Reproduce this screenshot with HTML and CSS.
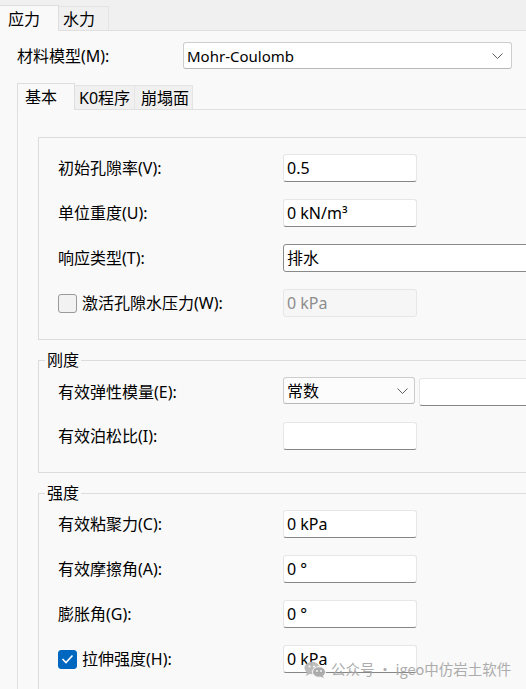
FILE: index.html
```html
<!DOCTYPE html>
<html lang="zh-CN">
<head>
<meta charset="utf-8">
<title>材料属性</title>
<link rel="stylesheet" href="styles.css">
</head>
<body>
<div class="tabbar">
  <div class="tab tab-active">应力</div>
  <div class="tab tab-water">水力</div>
</div>
<div class="page">
  <div class="model-row">
    <span class="model-label">材料模型(M):</span>
    <div class="combo model-combo">
      <span class="model-value">Mohr-Coulomb</span>
      <svg class="chev" width="11" height="6" viewBox="0 0 11 6"><polyline points="0.5,0.5 5.5,5.5 10.5,0.5" fill="none" stroke="#5f5f5f" stroke-width="1"/></svg>
    </div>
  </div>
  <div class="subtabs">
    <div class="subtab subtab-active">基本</div>
    <div class="subtab subtab-k0">K0程序</div>
    <div class="subtab subtab-cap">崩塌面</div>
  </div>
  <div class="panel">
    <div class="group group-basic">
      <div class="rows rows-basic">
        <div class="row"><span class="lbl">初始孔隙率(V):</span><div class="input">0.5</div></div>
        <div class="row"><span class="lbl">单位重度(U):</span><div class="input">0 kN/m³</div></div>
        <div class="row"><span class="lbl">响应类型(T):</span><div class="input wide-combo">排水</div></div>
        <div class="row"><span class="lbl chk-lbl"><span class="checkbox"></span>激活孔隙水压力(W):</span><div class="input disabled">0 kPa</div></div>
      </div>
    </div>
    <fieldset class="group group-stiff">
      <legend>刚度</legend>
      <div class="rows rows-stiff">
        <div class="row row-stiff1"><span class="lbl">有效弹性模量(E):</span>
          <div class="pair">
            <div class="combo const-combo"><span>常数</span><svg class="chev" width="11" height="6" viewBox="0 0 11 6"><polyline points="0.5,0.5 5.5,5.5 10.5,0.5" fill="none" stroke="#5f5f5f" stroke-width="1"/></svg></div>
            <div class="input side-input"></div>
          </div>
        </div>
        <div class="row"><span class="lbl">有效泊松比(I):</span><div class="input"></div></div>
      </div>
    </fieldset>
    <fieldset class="group group-strength">
      <legend>强度</legend>
      <div class="rows rows-strength">
        <div class="row"><span class="lbl">有效粘聚力(C):</span><div class="input">0 kPa</div></div>
        <div class="row"><span class="lbl">有效摩擦角(A):</span><div class="input">0 °</div></div>
        <div class="row"><span class="lbl">膨胀角(G):</span><div class="input">0 °</div></div>
        <div class="row"><span class="lbl chk-lbl"><span class="checkbox checked"><svg width="13" height="10" viewBox="0 0 13 10"><polyline points="1.5,5 5,8.5 11.5,1.5" fill="none" stroke="#fff" stroke-width="1.6"/></svg></span>拉伸强度(H):</span><div class="input">0 kPa</div></div>
      </div>
    </fieldset>
  </div>
</div>
<div class="watermark">
  <svg class="wx" width="22" height="17" viewBox="0 0 22 17">
    <ellipse cx="8" cy="7" rx="7.5" ry="6.3" fill="#b9b9b9"/>
    <path d="M3 11 L2 15 L6.5 12.5 Z" fill="#b9b9b9"/>
    <ellipse cx="15" cy="11" rx="6.5" ry="5.3" fill="#a9a9a9" stroke="#f9f9f9" stroke-width="1"/>
    <path d="M18.5 14.5 L20 17 L16 15.5 Z" fill="#a9a9a9"/>
    <circle cx="5.5" cy="5.5" r="1" fill="#f9f9f9"/>
    <circle cx="10" cy="5.5" r="1" fill="#f9f9f9"/>
    <circle cx="13" cy="10" r="0.9" fill="#f9f9f9"/>
    <circle cx="17" cy="10" r="0.9" fill="#f9f9f9"/>
  </svg>
  <span>公众号 · igeo中仿岩土软件</span>
</div>
</body>
</html>
```
FILE: styles.css
```css
* { box-sizing: border-box; }
html, body { margin: 0; }
body {
  width: 526px;
  height: 689px;
  overflow: hidden;
  position: relative;
  background: #f9f9f9;
  color: #000;
  font-family: "Noto Sans", "Noto Sans CJK SC", sans-serif;
  font-size: 16px;
  line-height: 20px;
}

/* top tabs */
.tabbar {
  height: 31px;
  background: #f0f0f0;
  border-bottom: 1px solid #e0e0e0;
  display: flex;
  align-items: flex-end;
}
.tab {
  height: 24px;
  display: flex;
  align-items: center;
  border: 1px solid #e4e4e4;
  border-bottom: none;
  background: #f0f0f0;
}
.tab-active {
  width: 59px;
  height: 26px;
  margin-bottom: -1px;
  padding-left: 8px;
  background: #f9f9f9;
  border-color: #dedede;
  border-left: none;
}
.tab-water {
  width: 50px;
  padding-left: 4px;
  border-left: none;
}

.page { padding-left: 17px; }

.model-row {
  margin-top: 11px;
  height: 27px;
  display: flex;
  align-items: center;
}
.model-label { width: 166px; }

.combo {
  display: flex;
  align-items: center;
  justify-content: space-between;
  background: #fff;
  border: 1px solid #cdcdcd;
  border-bottom-color: #b8b8b8;
  border-radius: 3px;
  padding-left: 3px;
}
.model-combo {
  width: 329px;
  height: 27px;
  padding-right: 8px;
}
.model-value { font-size: 15px; }

/* sub tabs */
.subtabs {
  margin-top: 14px;
  height: 27px;
  display: flex;
  align-items: flex-end;
  border-bottom: 1px solid #e0e0e0;
}
.subtab {
  height: 24px;
  display: flex;
  align-items: center;
  background: #f0f0f0;
  border: 1px solid #e4e4e4;
  border-bottom: none;
  border-left: none;
}
.subtab-active {
  width: 58px;
  height: 27px;
  margin-bottom: -1px;
  padding-left: 7px;
  background: #f9f9f9;
  border: 1px solid #dedede;
  border-bottom: none;
}
.subtab-k0 { width: 60px; padding-left: 4px; }
.subtab-cap { width: 58px; padding-left: 6px; }

/* panel */
.panel {
  border-left: 1px solid #e0e0e0;
  padding: 27px 0 0 20px;
  min-height: 600px;
}

.group {
  width: 520px;
  margin: 0;
  min-width: 0;
  border: 1px solid #dcdcdc;
  border-right: none;
}
.group-basic { padding: 16px 0 22px 0; }
fieldset.group { margin-top: 12px; padding: 9px 0 22px 0; }
.group-strength { padding-top: 9px; }
legend {
  margin-left: 6px;
  padding: 0 2px;
  line-height: 16px;
}

.rows {
  padding-left: 19px;
  display: grid;
  row-gap: 17px;
}
.rows-stiff { row-gap: 16px; }

.row {
  display: grid;
  grid-template-columns: 225px auto;
  align-items: center;
  height: 28px;
}
.row-stiff1 { height: 29px; align-items: start; }
.row-stiff1 .lbl { align-self: center; }

.input {
  width: 134px;
  height: 28px;
  background: #fff;
  border: 1px solid #e6e6e6;
  border-bottom: 1px solid #868686;
  border-radius: 3px;
  padding-left: 3px;
  display: flex;
  align-items: center;
}
.wide-combo {
  width: 260px;
  border: 1px solid #8a8a8a;
}
.disabled {
  background: #f6f6f6;
  border-color: #e6e6e6;
  color: #8c8c8c;
}

.pair { display: flex; gap: 4px; }
.const-combo {
  width: 132px;
  height: 27px;
  padding-right: 6px;
  background: #fcfcfc;
}
.side-input { width: 120px; margin-top: 1px; }

.chk-lbl {
  display: flex;
  align-items: center;
  gap: 5px;
}
.checkbox {
  width: 19px;
  height: 19px;
  border: 1px solid #9a9a9a;
  border-radius: 3px;
  background: #f2f2f2;
  display: flex;
  align-items: center;
  justify-content: center;
}
.checkbox.checked {
  background: #0067c0;
  border-color: #0067c0;
}

/* watermark overlay */
.watermark {
  position: absolute;
  left: 304px;
  top: 659px;
  display: flex;
  align-items: center;
  gap: 5px;
  color: #a8a8a8;
  font-family: "Noto Sans CJK SC", sans-serif;
  font-size: 14.5px;
  opacity: 0.95;
}
```
